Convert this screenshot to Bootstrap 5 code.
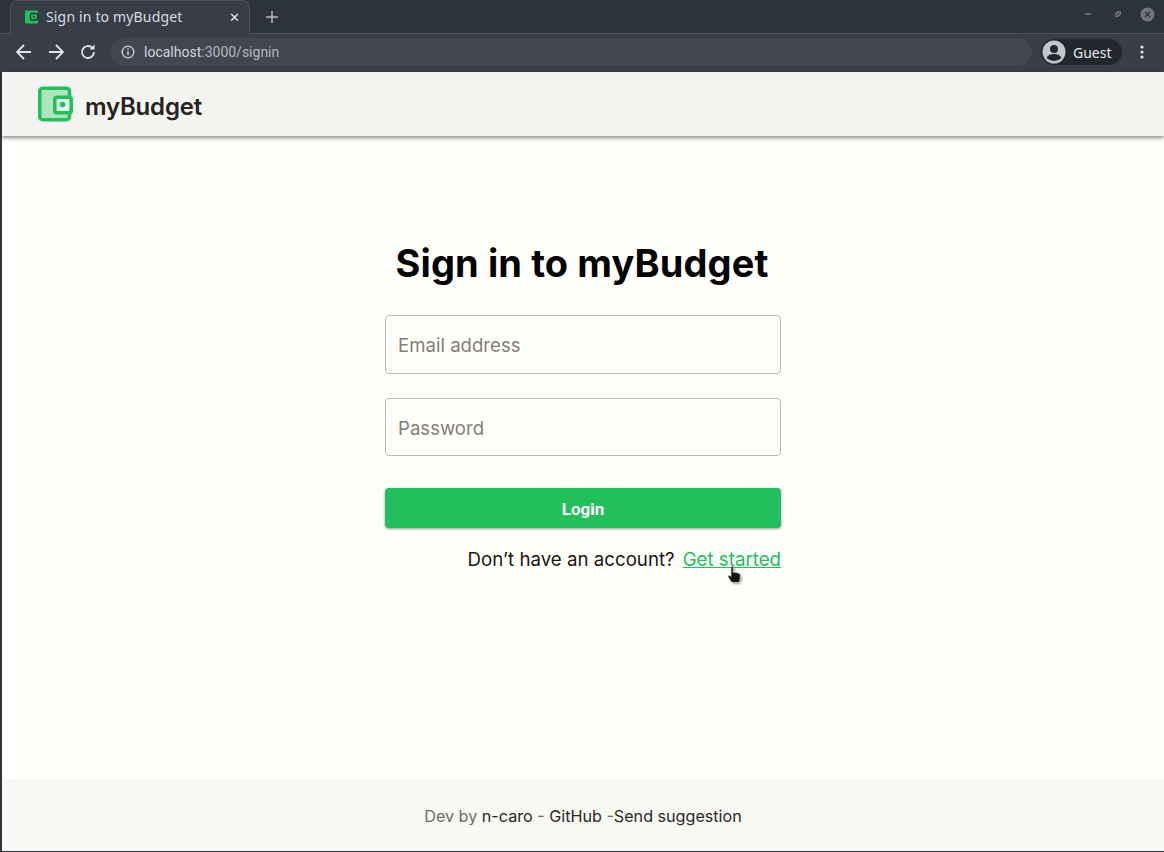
<!DOCTYPE html>
<html lang="en">
<head>
    <meta charset="UTF-8">
    <title>Sign in to myBudget</title>
    <link href="https://cdn.jsdelivr.net/npm/bootstrap@5.3.0/dist/css/bootstrap.min.css" rel="stylesheet">
    <style>
        html, body { height: 100%; overflow: hidden; }
        body { font-family: "Inter", "Liberation Sans", sans-serif; background: #2f3640; }

        /* browser chrome */
        .win-strip { height: 34px; background: #2d333d; border-bottom: 1px solid #4e545d; padding-left: 10px; }
        .win-tab { width: 240px; height: 34px; background: #383d48; border: 1px solid #4e545d; border-bottom: 0; border-radius: 8px 8px 0 0; padding: 0 9px 2px 13px; color: #d9dce0; font: 14px "Noto Sans", sans-serif; letter-spacing: .16px; margin-bottom: -1px; }
        .win-tab svg { margin-right: 6px; }
        .win-close { font-size: 13px; color: #e4e6e9; }
        .win-plus { width: 44px; }
        .win-ctrls { gap: 18px; padding: 0 9px 5px 0; }
        .win-ctrls svg:first-child { margin-right: 4px; }
        .win-toolbar { height: 38px; background: #383d48; padding: 0 20px 2px 14px; }
        .nav-icons { gap: 12px; }
        .url-pill { height: 28px; background: #41464f; border-radius: 14px; margin-left: 12px; padding: 0 11px; color: #d3d6da; font: 14px "Roboto", sans-serif; }
        .url-pill svg { margin-right: 9px; }
        .url-path { color: #b3b7bd; }
        .guest-pill { width: 81px; height: 26px; margin-left: 9px; background: #23262c; border-radius: 13px; color: #e8eaed; font: 14px "Noto Sans", sans-serif; padding-left: 1px; gap: 7px; }
        .dots-icon { margin-left: 18px; }

        /* page */
        .app-frame { height: 779px; margin: 0 0 1px 2px; background: #fffffb; }
        .app-header { height: 64px; background: #f4f4f0; box-shadow: 0 2px 4px rgba(0,0,0,.45); padding-left: 36px; gap: 12px; position: relative; }
        .brand-name { font-size: 24px; font-weight: 600; color: #262220; letter-spacing: -.2px; padding-top: 5px; }
        .app-main { flex: 1 1 auto; padding-top: 104px; }
        .signin-box { width: 396px; margin-left: 383px; }
        .signin-title { font-size: 38px; font-weight: 700; color: #050302; line-height: 46px; margin-bottom: 29px; letter-spacing: .1px; padding-right: 2px; }
        .signin-input { height: 59px; margin-bottom: 24px; border: 1px solid #bdb9b4; border-radius: 4px; padding: 0 12px; font-size: 18.6px; background: #fffffb; }
        .signin-input::placeholder { color: #857d78; }
        .signin-input.last-field { height: 58px; margin-bottom: 32px; padding-top: 2px; }
        .login-btn { height: 40px; padding-top: 8px; background: #22c05c; border: 0; border-radius: 4px; color: #fff; font: 700 17px "Roboto", sans-serif; box-shadow: 0 1px 3px rgba(0,0,0,.4); }
        .signup-line { margin-top: 20px; font-size: 18.7px; line-height: 24px; color: #1a1513; gap: 8px; }
        .signup-line a { color: #22c05c; }
        .hand-cursor { position: absolute; left: 726px; top: 564px; filter: drop-shadow(1px 1px 1px rgba(0,0,0,.45)); }
        .app-footer { height: 72px; padding-top: 2px; background: #f8f8f5; color: #6f6a67; font-size: 16.15px; }
        .app-footer a { color: #2b2725; text-decoration: none; }
    </style>
</head>
<body>
    <div class="win-strip d-flex align-items-end">
        <div class="win-tab d-flex align-items-center">
            <svg width="16" height="16" viewBox="0 0 16 16"><rect x="1" y="1.500" width="13" height="13" rx="1" fill="#22c05c"/><rect x="6.500" y="4.500" width="7" height="6.500" rx="1" fill="#22c05c" stroke="#24343a" stroke-width="1.300"/><circle cx="10" cy="7.700" r="1" fill="#24343a"/></svg>
            <span class="flex-grow-1">Sign in to myBudget</span>
            <span class="win-close">✕</span>
        </div>
        <div class="win-plus d-flex align-self-center justify-content-center">
            <svg width="14" height="14" viewBox="0 0 14 14"><path d="M7 1v12M1 7h12" stroke="#b6babf" stroke-width="1.500"/></svg>
        </div>
        <div class="win-ctrls d-flex align-self-center align-items-center ms-auto">
            <svg width="8" height="8" viewBox="0 0 8 8"><path d="M1 4h6" stroke="#6b7079" stroke-width="1.600"/></svg>
            <svg width="8" height="8" viewBox="0 0 8 8"><path d="M1 7V3.500L3.500 1H7v3.500L4.500 7z" fill="#6b7079"/><path d="M2 6l4-4" stroke="#2d333d"/></svg>
            <svg width="15" height="15" viewBox="0 0 15 15"><circle cx="7.500" cy="7.500" r="7" fill="#70757d"/><path d="M5 5l5 5M10 5l-5 5" stroke="#2d333d" stroke-width="1.500"/></svg>
        </div>
    </div>
    <div class="win-toolbar d-flex align-items-center">
        <div class="nav-icons d-flex align-items-center">
            <svg width="20" height="20" viewBox="0 0 20 20" fill="none" stroke="#e1e3e6" stroke-width="1.800"><path d="M17 10H3M10 3l-7 7 7 7"/></svg>
            <svg width="20" height="20" viewBox="0 0 20 20" fill="none" stroke="#e1e3e6" stroke-width="1.800"><path d="M3 10h14M10 3l7 7-7 7"/></svg>
            <svg width="20" height="20" viewBox="0 0 20 20" fill="none" stroke="#e1e3e6" stroke-width="1.800"><path d="M16 10a6 6 0 1 1-1.800-4.300"/><path d="M16.500 2.500v5h-5" fill="#e1e3e6" stroke="none"/></svg>
        </div>
        <div class="url-pill d-flex align-items-center flex-grow-1">
            <svg width="14" height="14" viewBox="0 0 14 14" fill="none"><circle cx="7" cy="7" r="5.800" stroke="#d3d6da" stroke-width="1.300"/><path d="M7 6v4.200M7 3.600v1.300" stroke="#d3d6da" stroke-width="1.400"/></svg>
            <span>localhost<span class="url-path">:3000/signin</span></span>
        </div>
        <div class="guest-pill d-flex align-items-center">
            <svg width="24" height="24" viewBox="0 0 24 24"><circle cx="12" cy="12" r="11.500" fill="#c3c6ca"/><circle cx="12" cy="9" r="4" fill="#23262c"/><path d="M4.500 18c1.500-3.200 4.500-4 7.500-4s6 .8 7.500 4a11 11 0 0 1-15 0z" fill="#23262c"/></svg>
            <span>Guest</span>
        </div>
        <svg class="dots-icon" width="4" height="14" viewBox="0 0 4 14" fill="#dfe1e4"><circle cx="2" cy="2" r="1.600"/><circle cx="2" cy="7" r="1.600"/><circle cx="2" cy="12" r="1.600"/></svg>
    </div>

    <div class="app-frame d-flex flex-column">
        <header class="app-header d-flex align-items-center flex-shrink-0">
            <svg width="35" height="36" viewBox="0 0 35 36">
                <rect x="1.800" y="2.300" width="29.700" height="31.400" rx="3" fill="#aee5c1" stroke="#22c05c" stroke-width="3.600"/>
                <rect x="16.800" y="11.300" width="16.400" height="15.400" rx="2" fill="#e6f6eb" stroke="#22c05c" stroke-width="3.600"/>
                <circle cx="24.500" cy="18.500" r="2.800" fill="#22c05c"/>
            </svg>
            <span class="brand-name">myBudget</span>
        </header>
        <main class="app-main">
            <form class="signin-box d-flex flex-column">
                <h1 class="signin-title text-center">Sign in to myBudget</h1>
                <input class="form-control signin-input" type="email" placeholder="Email address">
                <input class="form-control signin-input last-field" type="password" placeholder="Password">
                <button class="btn login-btn" type="button">Login</button>
                <div class="signup-line d-flex justify-content-end">
                    <span>Don’t have an account?</span>
                    <a href="#">Get started</a>
                </div>
            </form>
        </main>
        <footer class="app-footer d-flex align-items-center justify-content-center flex-shrink-0">
            <span>Dev by <a href="#">n-caro</a> - <a href="#">GitHub</a> -<a href="#">Send suggestion</a></span>
        </footer>
    </div>
    <svg class="hand-cursor" width="17" height="20" viewBox="0 0 17 20"><path d="M5 3c0-1.200 2.200-1.200 2.200 0v5.500l1-.3c.6-.2 1.200 0 1.400.5.6-.4 1.400-.3 1.700.3.700-.3 1.400 0 1.600.6.900-.2 1.300.5 1.300 1.400v3.500c0 2-1 4-2.700 4H7c-1.200 0-1.900-1-2.600-2L2.200 13c-.7-1 .5-2.300 1.600-1.500L5 12.500z" fill="#111" stroke="#fff" stroke-width=".6"/></svg>
</body>
</html>
